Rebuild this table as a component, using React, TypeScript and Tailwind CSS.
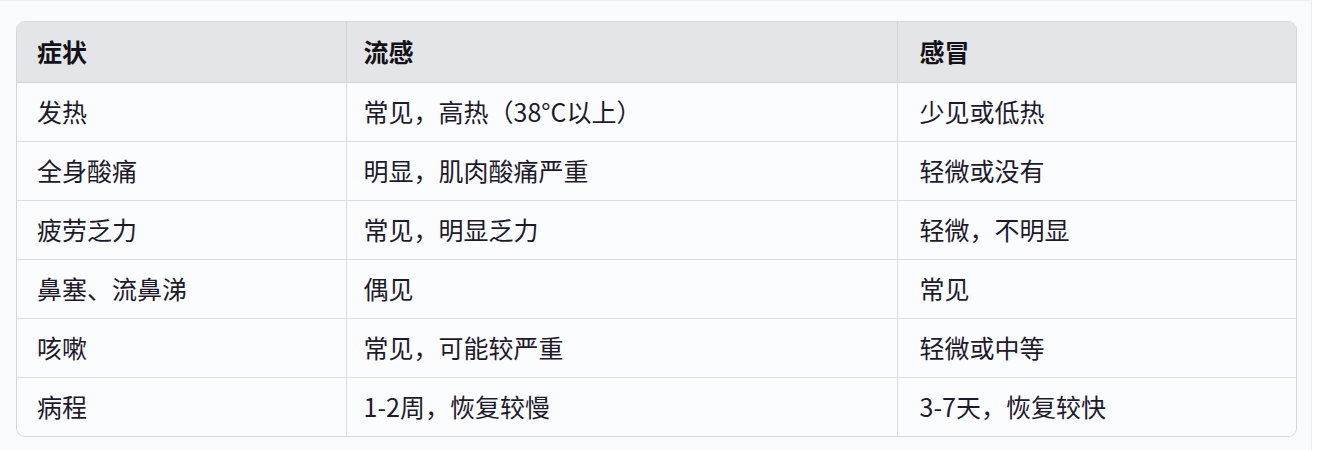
const rows = [
  ['发热', '常见，高热（38°C以上）', '少见或低热'],
  ['全身酸痛', '明显，肌肉酸痛严重', '轻微或没有'],
  ['疲劳乏力', '常见，明显乏力', '轻微，不明显'],
  ['鼻塞、流鼻涕', '偶见', '常见'],
  ['咳嗽', '常见，可能较严重', '轻微或中等'],
  ['病程', '1-2周，恢复较慢', '3-7天，恢复较快'],
];

export default function App() {
  return (
    <div
      className="w-[1320px] h-[450px] bg-white"
      style={{ fontFamily: '"Noto Sans CJK SC", "Noto Sans", sans-serif' }}
    >
      <div className="w-[1312px] h-[450px] bg-[#f9fafc] border-t border-r border-[#eceef2] pt-[20px] pl-[16px]">
        <div className="w-[1281px] rounded-[9px] border border-[#d3d6db] overflow-hidden">
          <table className="w-full border-collapse table-fixed">
            <colgroup>
              <col className="w-[329px]" />
              <col className="w-[551px]" />
              <col />
            </colgroup>
            <thead>
              <tr className="bg-[#e4e5e9] h-[60px]">
                <th className="text-left font-bold text-[25px] text-[#141218] pl-[20px] border-b border-[#cfd2d8]">症状</th>
                <th className="text-left font-bold text-[25px] text-[#141218] pl-[17px] border-b border-l border-[#cfd2d8]">流感</th>
                <th className="text-left font-bold text-[25px] text-[#141218] pl-[22px] border-b border-l border-[#cfd2d8]">感冒</th>
              </tr>
            </thead>
            <tbody className="bg-[#fbfcfe]">
              {rows.map((r, i) => (
                <tr key={i} className="h-[59px]">
                  <td className={`text-[25px] text-[#1e1a2b] pl-[20px] ${i < rows.length - 1 ? 'border-b' : ''} border-[#dadde3]`}>{r[0]}</td>
                  <td className={`text-[25px] text-[#1e1a2b] pl-[17px] border-l ${i < rows.length - 1 ? 'border-b' : ''} border-[#dadde3]`}>{r[1]}</td>
                  <td className={`text-[25px] text-[#1e1a2b] pl-[22px] border-l ${i < rows.length - 1 ? 'border-b' : ''} border-[#dadde3]`}>{r[2]}</td>
                </tr>
              ))}
            </tbody>
          </table>
        </div>
      </div>
    </div>
  );
}
